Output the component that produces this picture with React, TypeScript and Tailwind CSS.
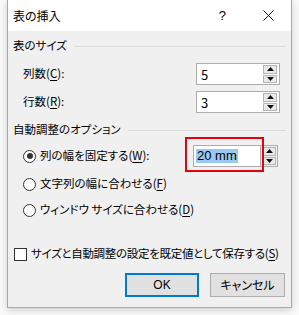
import React from 'react'

const JP = "font-['Noto_Sans_CJK_JP','Noto_Sans',sans-serif] [font-feature-settings:'palt']"

function Acc({ k }: { k: string }) {
  return (
    <>
      (<span className="underline underline-offset-2">{k}</span>)
    </>
  )
}

function Spinner({ h }: { h: number }) {
  const half = h / 2
  return (
    <div className="flex w-[14px] flex-col gap-px">
      <div
        className="flex items-center justify-center border border-[#b4b4b4] bg-[#e9e9e9]"
        style={{ height: half - 0.5 }}
      >
        <svg width="7" height="4" viewBox="0 0 7 4">
          <path d="M0 4 L3.5 0 L7 4 Z" fill="#111" />
        </svg>
      </div>
      <div
        className="flex items-center justify-center border border-[#b4b4b4] bg-[#e9e9e9]"
        style={{ height: half - 0.5 }}
      >
        <svg width="7" height="4" viewBox="0 0 7 4">
          <path d="M0 0 L3.5 4 L7 0 Z" fill="#111" />
        </svg>
      </div>
    </div>
  )
}

function NumberBox({ value }: { value: string }) {
  return (
    <div className="mr-[11px] ml-auto flex h-[22px] w-[84px] items-center border border-[#adadad] bg-white pr-[2px] pl-[4px]">
      <span className="flex-1 text-[13px] leading-none">{value}</span>
      <Spinner h={18} />
    </div>
  )
}

function SectionHeader({ label, mt }: { label: string; mt: string }) {
  return (
    <div className={`flex h-[16px] items-center pl-[5px] ${mt}`}>
      <span>{label}</span>
      <div className="mr-[5px] ml-[7px] h-px flex-1 bg-[#dcdcdc]" />
    </div>
  )
}

function Radio({ checked }: { checked?: boolean }) {
  return (
    <span className="flex h-[13px] w-[13px] shrink-0 items-center justify-center rounded-full border border-[#333] bg-white">
      {checked && <span className="h-[6px] w-[6px] rounded-full bg-[#333]" />}
    </span>
  )
}

export default function App() {
  return (
    <div className={`relative h-[315px] w-[299px] overflow-hidden bg-[#fafafa] text-[11.5px] text-black ${JP}`}>
      <div className="ml-[7px] flex h-[308px] w-[285px] flex-col border-x border-b border-[#7fb3e6] shadow-[0_2px_8px_rgba(0,0,0,0.18)]">
        {/* Title bar */}
        <div className="flex h-[31px] items-center bg-white pl-[5px]">
          <span className="text-[12px]">表の挿入</span>
          <span className="ml-auto mr-[37px] font-['Liberation_Sans',sans-serif] text-[13px]">?</span>
          <svg width="11" height="11" viewBox="0 0 11 11" className="mr-[17px]">
            <path d="M0.5 0.5 L10.5 10.5 M10.5 0.5 L0.5 10.5" stroke="#111" strokeWidth="1" />
          </svg>
        </div>

        {/* Body */}
        <div className="flex flex-1 flex-col bg-[#f0f0f0]">
          <SectionHeader label="表のサイズ" mt="mt-[7px]" />

          <div className="mt-[9px] flex h-[22px] items-center pl-[15px]">
            <span>
              列数<Acc k="C" />:
            </span>
            <NumberBox value="5" />
          </div>
          <div className="mt-[6px] flex h-[22px] items-center pl-[15px]">
            <span>
              行数<Acc k="R" />:
            </span>
            <NumberBox value="3" />
          </div>

          <SectionHeader label="自動調整のオプション" mt="mt-[9px]" />

          <div className="mt-[7px] flex h-[22px] items-center gap-[4px] pl-[15px]">
            <Radio checked />
            <span>
              列の幅を固定する<Acc k="W" />:
            </span>
            <div className="mr-[13px] ml-auto flex h-[22px] items-stretch">
              <div className="flex w-[68px] items-center border border-[#adadad] bg-white pl-[2px]">
                <span className="bg-[#99c9ef] px-[1px] font-['Liberation_Sans',sans-serif] text-[13px] leading-[14px]">
                  20 mm
                </span>
              </div>
              <div className="flex items-center border border-l-0 border-[#adadad] px-px">
                <Spinner h={18} />
              </div>
            </div>
          </div>

          <div className="mt-[9px] flex h-[16px] items-center gap-[4px] pl-[15px]">
            <Radio />
            <span>
              文字列の幅に合わせる<Acc k="F" />
            </span>
          </div>
          <div className="mt-[10px] flex h-[16px] items-center gap-[4px] pl-[15px]">
            <Radio />
            <span>
              ウィンドウ サイズに合わせる<Acc k="D" />
            </span>
          </div>

          <div className="mt-[28px] flex h-[16px] items-center gap-[4px] pl-[6px]">
            <span className="h-[13px] w-[13px] shrink-0 border border-[#333] bg-white" />
            <span className="whitespace-nowrap tracking-[-0.3px]">
              サイズと自動調整の設定を既定値として保存する<Acc k="S" />
            </span>
          </div>

          <div className="mt-[11px] flex justify-end gap-[11px] pr-[6px]">
            <button className="h-[24px] w-[74px] border-2 border-[#0078d7] bg-[#e1e1e1] font-['Liberation_Sans',sans-serif] text-[12px]">
              OK
            </button>
            <button className="h-[24px] w-[75px] border border-[#adadad] bg-[#e1e1e1] text-[12px]">
              キャンセル
            </button>
          </div>
        </div>
      </div>

      {/* red annotation box */}
      <div className="absolute top-[137px] left-[185px] h-[35px] w-[79px] border-2 border-red-600" />
    </div>
  )
}
